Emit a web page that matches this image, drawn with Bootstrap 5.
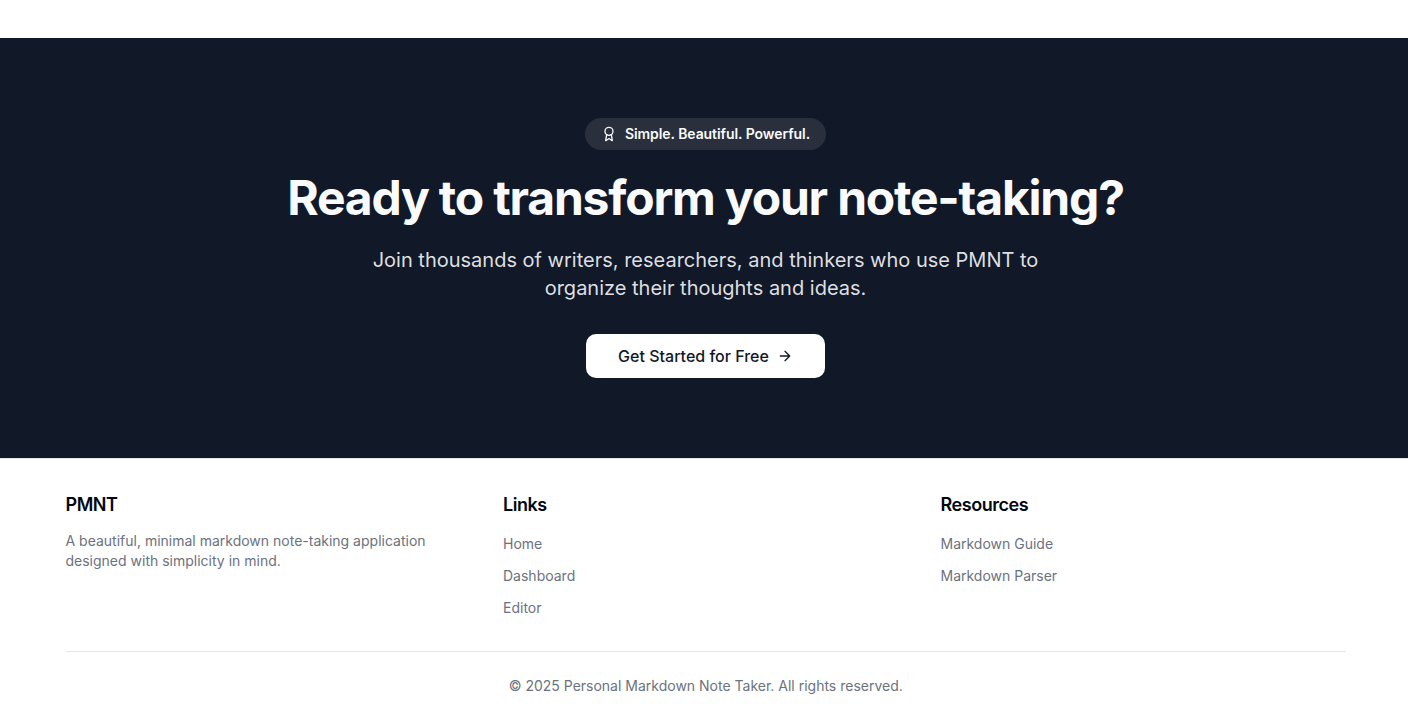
<!DOCTYPE html>
<html lang="en">
<head>
<meta charset="utf-8">
<meta name="viewport" content="width=device-width, initial-scale=1">
<title>PMNT</title>
<link href="https://cdn.jsdelivr.net/npm/bootstrap@5.3.0/dist/css/bootstrap.min.css" rel="stylesheet">
<style>
body{font-family:Inter,sans-serif;color:#030712;background:#fff;line-height:1.5;overflow:hidden}
.cta{margin-top:38px;background:#111827;color:#f9fafb;height:420px;padding-top:80px;padding-left:3px}
.pill{background:rgba(255,255,255,.1);font-size:14px;line-height:20px;font-weight:600;padding:6px 16px;letter-spacing:-.065px}
.cta-title{font-size:48px;line-height:48px;font-weight:700;letter-spacing:-1.2px;margin:24px 0 0}
.cta-text{font-size:20px;line-height:28px;width:672px;color:#dedfe1;margin:24px 0 0}
.btn-start{--bs-btn-bg:#fff;--bs-btn-color:#111827;--bs-btn-hover-bg:#eee;height:44px;padding:0 32px;margin-top:32px;border:0;border-radius:10px;font-size:16px;font-weight:500}
.site-footer{border-top:1px solid #e5e7eb;padding:32px 62px 0 65.5px}
.cols{display:grid;grid-template-columns:repeat(3,1fr);gap:32px}
.cols h3{font-size:18px;line-height:28px;font-weight:600;margin:0 0 12px;letter-spacing:-.45px}
.muted{font-size:14px;line-height:20px;color:#6b7280}
.muted a{color:inherit;text-decoration:none}
.links li{height:24px;margin-bottom:8px;line-height:26px}
.legal{border-top:1px solid #e5e7eb;margin-top:24px;padding-top:24px}
</style>
</head>
<body>
<section class="cta d-flex flex-column align-items-center text-center">
  <div class="pill rounded-pill d-inline-flex align-items-center gap-2">
    <svg width="16" height="16" viewBox="0 0 24 24" fill="none" stroke="currentColor" stroke-width="2" stroke-linecap="round" stroke-linejoin="round"><path d="m15.477 12.89 1.515 8.526a.5.5 0 0 1-.81.47l-3.58-2.687a1 1 0 0 0-1.197 0l-3.586 2.686a.5.5 0 0 1-.81-.469l1.514-8.526"/><circle cx="12" cy="8" r="6"/></svg>
    <span>Simple. Beautiful. Powerful.</span>
  </div>
  <h2 class="cta-title">Ready to transform your note-taking?</h2>
  <p class="cta-text">Join thousands of writers, researchers, and thinkers who use PMNT to organize their thoughts and ideas.</p>
  <a href="#" class="btn btn-start d-inline-flex align-items-center gap-2">Get Started for Free
    <svg width="16" height="16" viewBox="0 0 24 24" fill="none" stroke="currentColor" stroke-width="2" stroke-linecap="round" stroke-linejoin="round"><path d="M5 12h14M12 5l7 7-7 7"/></svg>
  </a>
</section>
<footer class="site-footer">
  <div class="cols">
    <div><h3>PMNT</h3><p class="muted m-0">A beautiful, minimal markdown note-taking application designed with simplicity in mind.</p></div>
    <div><h3>Links</h3><ul class="links muted list-unstyled m-0"><li><a href="#">Home</a></li><li><a href="#">Dashboard</a></li><li><a href="#">Editor</a></li></ul></div>
    <div><h3>Resources</h3><ul class="links muted list-unstyled m-0"><li><a href="#">Markdown Guide</a></li><li><a href="#">Markdown Parser</a></li></ul></div>
  </div>
  <div class="legal muted text-center">© 2025 Personal Markdown Note Taker. All rights reserved.</div>
</footer>
<script src="https://cdn.jsdelivr.net/npm/bootstrap@5.3.0/dist/js/bootstrap.bundle.min.js"></script>
</body>
</html>
